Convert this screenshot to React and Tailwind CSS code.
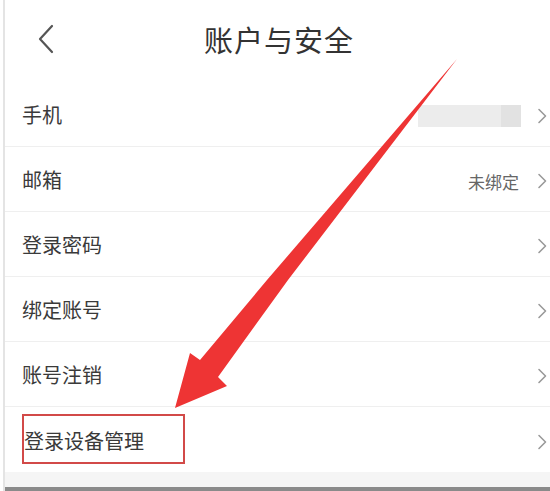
import React from 'react';

const rows = [
  { label: '手机', value: 'phone' },
  { label: '邮箱', value: '未绑定' },
  { label: '登录密码' },
  { label: '绑定账号' },
  { label: '账号注销' },
  { label: '登录设备管理', highlight: true },
];

const Chevron = () => (
  <svg width="11" height="16" viewBox="0 0 11 16" fill="none" className="shrink-0">
    <path d="M2 1.5 L8.5 8 L2 14.5" stroke="#9a9a9a" strokeWidth="1.6" strokeLinecap="round" strokeLinejoin="round" />
  </svg>
);

const App = () => {
  return (
    <div className="relative w-[550px] h-[491px] bg-white overflow-hidden font-['Noto_Sans_CJK_SC',sans-serif]">
      <div className="flex h-full flex-col pl-[3px]">
        <div className="flex h-full flex-col border-l-2 border-[#e4e4e4]">
          {/* Header */}
          <div className="flex h-[82px] shrink-0 items-center pb-[4px]">
            <svg width="18" height="30" viewBox="0 0 18 30" fill="none" className="ml-[32px]">
              <path d="M15 2 L3 15 L15 28" stroke="#555" strokeWidth="2.2" strokeLinecap="round" strokeLinejoin="round" />
            </svg>
            <h1 className="ml-[149px] text-[29px] leading-none tracking-[1px] text-[#333]">账户与安全</h1>
          </div>

          {/* Rows */}
          {rows.map((row, i) => (
            <div
              key={row.label}
              className={`flex h-[65px] shrink-0 items-center justify-between pl-[17px] pr-[2px] pt-[4px] ${
                i < rows.length - 1 ? 'border-b border-[#efefef]' : ''
              }`}
            >
              <div className="relative">
                <span className={`text-[20px] leading-none text-[#3a3a3a] ${row.highlight ? 'pl-[2px]' : ''}`}>
                  {row.label}
                </span>
                {row.highlight && (
                  <div className="absolute -top-[16px] left-0 h-[50px] w-[163px] border-2 border-[#d24a48]" />
                )}
              </div>
              <div className="flex items-center">
                {row.value === 'phone' && (
                  <div className="mr-[16px] flex h-[22px]">
                    <div className="w-[83px] bg-[#ececec]" />
                    <div className="w-[20px] bg-[#e2e2e2]" />
                  </div>
                )}
                {row.value === '未绑定' && (
                  <span className="mr-[18px] text-[17px] leading-none text-[#666]">未绑定</span>
                )}
                <Chevron />
              </div>
            </div>
          ))}

          <div className="flex-1 bg-[#f5f5f5]" />
          <div className="h-[4px] shrink-0 bg-[#8a8a8a]" />
        </div>
      </div>

      {/* Annotation arrow */}
      <svg className="pointer-events-none absolute inset-0" width="550" height="491" viewBox="0 0 550 491">
        <polygon
          points="457,59 288,280 218,377 227,386 175,408 190,353 200,360 267,280"
          fill="#ee3434"
        />
      </svg>
    </div>
  );
};

export default App;
